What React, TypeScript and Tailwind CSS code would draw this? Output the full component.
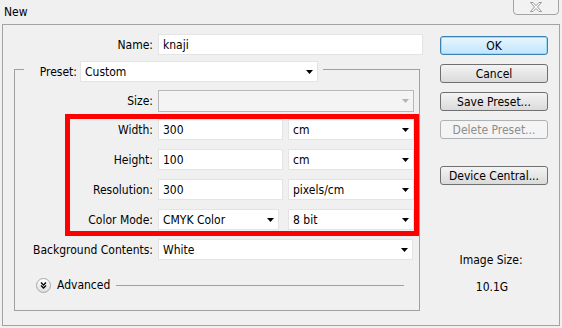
import React from 'react';

const Arrow = ({ disabled = false }: { disabled?: boolean }) => (
  <svg width="7" height="4" viewBox="0 0 7 4" className="shrink-0">
    <path d="M0 0h7L3.5 4z" fill={disabled ? '#b4b4b4' : '#000'} />
  </svg>
);

const Field = ({ value, className = '' }: { value: string; className?: string }) => (
  <div className={`flex h-[21px] items-center border border-[#e4e4e4] bg-white pl-[4px] ${className}`}>
    {value}
  </div>
);

const Select = ({ value, className = '' }: { value: string; className?: string }) => (
  <div
    className={`flex h-[21px] items-center justify-between border border-[#e4e4e4] bg-white pl-[4px] pr-[4px] ${className}`}
  >
    <span>{value}</span>
    <Arrow />
  </div>
);

const Button = ({ label, primary = false, disabled = false }: { label: string; primary?: boolean; disabled?: boolean }) => {
  let cls = 'border-[#707070] bg-gradient-to-b from-[#f4f4f4] to-[#dadada] text-black';
  if (primary) cls = 'border-[#3c7fb1] bg-gradient-to-b from-[#eaf6fd] to-[#bee6fd] text-black shadow-[inset_0_0_0_1px_#9cd9f5]';
  if (disabled) cls = 'border-[#adb2b5] bg-[#f4f4f4] text-[#8d8d8d]';
  return (
    <div className={`flex h-[19px] w-[108px] items-center justify-center rounded-[3px] border ${cls}`}>
      {label}
    </div>
  );
};

const Row = ({ label, children, labelW }: { label: string; children: React.ReactNode; labelW: string }) => (
  <div className="flex items-center">
    <div className={`${labelW} shrink-0 pr-[5px] text-right`}>{label}</div>
    {children}
  </div>
);

export default function App() {
  return (
    <div
      className="h-[328px] w-[562px] overflow-hidden bg-[#f0f0f0] text-[12px] text-black"
      style={{ fontFamily: '"DejaVu Sans Condensed", Tahoma, "DejaVu Sans", sans-serif' }}
    >
      {/* title bar */}
      <div className="flex h-[24px] items-start justify-between">
        <div className="pl-[4px] pt-[3px]">New</div>
        <div className="mr-[3px] mt-[-1px] flex h-[16px] w-[46px] items-center justify-center rounded-b-[4px] border border-[#a4a4a4] bg-[#f2f2f2]">
          <svg width="12" height="10" viewBox="0 0 12 10">
            <polygon
              points="0.5,0.5 3,0.5 6,3.5 9,0.5 11.5,0.5 7.5,5 11.5,9.5 9,9.5 6,6.5 3,9.5 0.5,9.5 4.5,5"
              fill="#fbfbfb"
              stroke="#9a9a9a"
              strokeWidth="1"
            />
          </svg>
        </div>
      </div>

      {/* main panel */}
      <div className="ml-[2px] flex h-[302px] w-[558px] border border-[#a3a3a3] bg-[#f0f0f0]">
        {/* left column */}
        <div className="flex w-[420px] flex-col pt-[9px]">
          <Row label="Name:" labelW="w-[155px]">
            <Field value="knaji" className="flex-1" />
          </Row>

          {/* preset group */}
          <div className="ml-[11px] mt-[6px] w-[406px]">
            <div className="flex h-[21px] items-center">
              <div className="mt-[8px] h-[1px] w-[10px] self-start bg-[#a0a0a0]" />
              <div className="w-[56px] pr-[3px] text-right">Preset:</div>
              <Select value="Custom" className="w-[238px]" />
              <div className="ml-[5px] mt-[8px] h-[1px] flex-1 self-start bg-[#a0a0a0]" />
            </div>
            <div className="mt-[-13px] flex h-[242px] flex-col border-x border-b border-[#a0a0a0] pt-[21px]">
              <Row label="Size:" labelW="w-[143px]">
                <div className="flex h-[22px] w-[256px] items-center justify-end border border-[#b8b8b8] bg-[#f4f4f4] pr-[4px]">
                  <Arrow disabled />
                </div>
              </Row>
              <div className="ml-[50px] mt-[2px] flex flex-col gap-[9px] border-[5px] border-[#ff0000] pb-[1px]">
                <Row label="Width:" labelW="w-[88px]">
                  <Field value="300" className="w-[125px]" />
                  <Select value="cm" className="ml-[5px] w-[126px]" />
                </Row>
                <Row label="Height:" labelW="w-[88px]">
                  <Field value="100" className="w-[125px]" />
                  <Select value="cm" className="ml-[5px] w-[126px]" />
                </Row>
                <Row label="Resolution:" labelW="w-[88px]">
                  <Field value="300" className="w-[125px]" />
                  <Select value="pixels/cm" className="ml-[5px] w-[126px]" />
                </Row>
                <Row label="Color Mode:" labelW="w-[88px]">
                  <Select value="CMYK Color" className="w-[121px]" />
                  <Select value="8 bit" className="ml-[9px] w-[126px]" />
                </Row>
              </div>
              <div className="mt-[3px]">
                <Row label="Background Contents:" labelW="w-[143px]">
                  <Select value="White" className="w-[255px]" />
                </Row>
              </div>
              <div className="mt-[16px] flex items-center">
                <div className="ml-[21px] flex h-[15px] w-[15px] items-center justify-center rounded-full border border-[#a8a8a8] bg-gradient-to-b from-white to-[#dedede]">
                  <svg width="7" height="7" viewBox="0 0 7 7">
                    <path d="M1 0.5l2.5 2.5 2.5-2.5M1 3.5l2.5 2.5 2.5-2.5" fill="none" stroke="#000" strokeWidth="1.3" />
                  </svg>
                </div>
                <span className="ml-[6px]">Advanced</span>
                <div className="ml-[6px] mr-[15px] h-[1px] flex-1 bg-[#a0a0a0]" />
              </div>
            </div>
          </div>
        </div>

        {/* right column */}
        <div className="ml-[17px] flex w-[108px] flex-col pt-[11px]">
          <Button label="OK" primary />
          <div className="mt-[9px]">
            <Button label="Cancel" />
          </div>
          <div className="mt-[9px]">
            <Button label="Save Preset..." />
          </div>
          <div className="mt-[9px]">
            <Button label="Delete Preset..." disabled />
          </div>
          <div className="mt-[27px]">
            <Button label="Device Central..." />
          </div>
          <div className="mt-[66px] pr-[6px] text-center">Image Size:</div>
          <div className="mt-[9px] pr-[4px] text-center">10.1G</div>
        </div>
      </div>
    </div>
  );
}
